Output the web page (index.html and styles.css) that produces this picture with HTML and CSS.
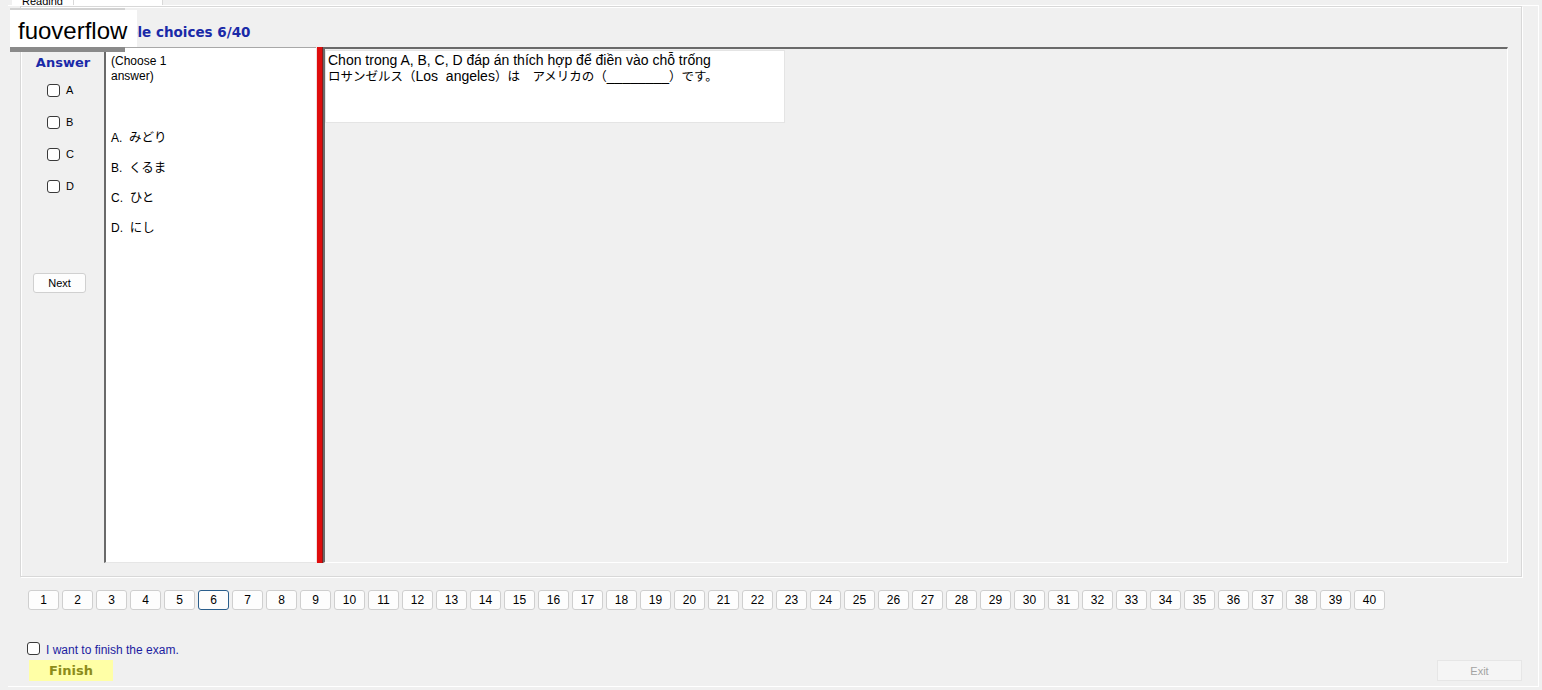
FILE: index.html
```html
<!DOCTYPE html>
<html lang="vi">
<head>
<meta charset="utf-8">
<title>Exam</title>
<link rel="stylesheet" href="styles.css">
</head>
<body>
<div class="tabstrip">
  <div class="tab tab-active"><span class="tab-label">Reading</span></div>
  <div class="tab tab-other"></div>
</div>
<div class="tabpage">
  <div class="group">
    <div class="title">Multiple choices 6/40</div>
    <div class="work">
      <div class="answers">
        <div class="answers-title">Answer</div>
        <label class="opt"><span class="cb"></span><span>A</span></label>
        <label class="opt"><span class="cb"></span><span>B</span></label>
        <label class="opt"><span class="cb"></span><span>C</span></label>
        <label class="opt"><span class="cb"></span><span>D</span></label>
        <button class="next">Next</button>
      </div>
      <div class="choices">
        <div class="intro">(Choose 1<br>answer)</div>
        <div class="options">
          <div class="option">A.&nbsp; <span class="jp">みどり</span></div>
          <div class="option">B.&nbsp; <span class="jp">くるま</span></div>
          <div class="option">C.&nbsp; <span class="jp">ひと</span></div>
          <div class="option">D.&nbsp; <span class="jp">にし</span></div>
        </div>
      </div>
      <div class="splitter"></div>
      <div class="question-area">
        <div class="question">Chon trong A, B, C, D đáp án thích hợp để điền vào chỗ trống<br><span class="jp">ロサンゼルス（</span>Los&nbsp; angeles<span class="jp">）は　アメリカの（</span>________<span class="jp">）です。</span></div>
      </div>
    </div>
  </div>
  <div class="pager">
    <button class="pg">1</button><button class="pg">2</button><button class="pg">3</button><button class="pg">4</button><button class="pg">5</button><button class="pg pg-current">6</button><button class="pg">7</button><button class="pg">8</button><button class="pg">9</button><button class="pg">10</button>
    <button class="pg">11</button><button class="pg">12</button><button class="pg">13</button><button class="pg">14</button><button class="pg">15</button><button class="pg">16</button><button class="pg">17</button><button class="pg">18</button><button class="pg">19</button><button class="pg">20</button>
    <button class="pg">21</button><button class="pg">22</button><button class="pg">23</button><button class="pg">24</button><button class="pg">25</button><button class="pg">26</button><button class="pg">27</button><button class="pg">28</button><button class="pg">29</button><button class="pg">30</button>
    <button class="pg">31</button><button class="pg">32</button><button class="pg">33</button><button class="pg">34</button><button class="pg">35</button><button class="pg">36</button><button class="pg">37</button><button class="pg">38</button><button class="pg">39</button><button class="pg">40</button>
  </div>
  <label class="finish-check"><span class="cb"></span><span>I want to finish the exam.</span></label>
  <div class="actions">
    <button class="finish">Finish</button>
    <button class="exit">Exit</button>
  </div>
</div>
<div class="watermark">
  <div class="wm-top"></div>
  <div class="wm-body">fuoverflow</div>
  <div class="wm-bottom"></div>
</div>
</body>
</html>
```

FILE: styles.css
```css
* { box-sizing: border-box; }

html, body {
  margin: 0;
  padding: 0;
}

body {
  width: 1542px;
  height: 690px;
  overflow: hidden;
  background: #f0f0f0;
  font-family: "Liberation Sans", Arial, "Noto Sans CJK JP", sans-serif;
  color: #000;
  position: relative;
}

.jp {
  font-family: "Noto Sans CJK JP", "Liberation Sans", sans-serif;
}

/* tab strip (mostly cut off at the top) */
.tabstrip {
  height: 5px;
  display: flex;
  padding-left: 12px;
}

.tab {
  height: 5px;
  overflow: hidden;
  background: #fff;
  border-right: 1px solid #d9d9d9;
}

.tab-active {
  width: 62px;
  display: flex;
  justify-content: center;
  align-items: flex-end;
}

.tab-label {
  font-size: 11px;
  line-height: 12px;
  margin-bottom: -2px;
  color: #000;
}

.tab-other {
  width: 89px;
}

/* tab page */
.tabpage {
  margin-left: 8px;
  width: 1531px;
  height: 682px;
  border-top: 1px solid #fff;
  border-right: 1px solid #fff;
  border-bottom: 1px solid #fff;
}

/* group box */
.group {
  margin-left: 12px;
  width: 1502px;
  height: 571px;
  border: 1px solid #d8d8d8;
  box-shadow: inset 1px 1px 0 #fff, 1px 1px 0 #fff;
}

.title {
  height: 40px;
  padding: 17px 0 0 68px;
  font-family: "DejaVu Sans", Tahoma, sans-serif;
  font-weight: bold;
  font-size: 13.5px;
  line-height: 17px;
  color: #1a2aa8;
}

.work {
  display: flex;
  margin-left: 1px;
  width: 1486px;
  height: 516px;
}

/* answer column */
.answers {
  width: 82px;
  flex: none;
  display: flex;
  flex-direction: column;
  padding-top: 8px;
}

.answers-title {
  height: 16px;
  line-height: 16px;
  text-align: center;
  font-family: "DejaVu Sans", Tahoma, sans-serif;
  font-weight: bold;
  font-size: 13px;
  color: #1a2aa8;
  margin-bottom: 11px;
}

.opt {
  display: flex;
  align-items: center;
  height: 16px;
  margin: 0 0 16px 25px;
  font-size: 11px;
  gap: 6px;
}

.cb {
  display: inline-block;
  width: 13px;
  height: 13px;
  border: 1px solid #3a3a3a;
  border-radius: 3px;
  background: #fff;
  flex: none;
}

.next {
  margin: 63px 0 0 11px;
  width: 53px;
  height: 20px;
  padding: 0;
  background: #fdfdfd;
  border: 1px solid #d0d0d0;
  border-radius: 3px;
  font-family: "Liberation Sans", Arial, sans-serif;
  font-size: 11px;
  color: #000;
}

/* choices panel */
.choices {
  width: 212px;
  flex: none;
  background: #fff;
  border-left: 2px solid #6a6a6a;
  border-top: 1px solid #a8a8a8;
  border-bottom: 1px solid #e6e6e6;
  padding: 6px 5px 0 5px;
  font-size: 12px;
}

.intro {
  line-height: 15px;
}

.options {
  margin-top: 38px;
}

.option {
  line-height: 30px;
  height: 30px;
}

.option .jp {
  font-size: 12.5px;
}

/* red splitter */
.splitter {
  width: 7px;
  flex: none;
  border-left: 1px solid #f2dede;
  background: #df0d0d;
  border-right: 1px solid #8a1a1a;
}

/* question area */
.question-area {
  flex: 1;
  border-top: 2px solid #6a6a6a;
  border-left: 2px solid #6a6a6a;
  border-right: 1px solid #fff;
  border-bottom: 1px solid #fff;
  padding-top: 1px;
}

.question {
  width: 460px;
  height: 73px;
  background: #fff;
  border: 1px solid #e4e4e4;
  padding: 2px 2px;
  font-size: 14px;
  line-height: 15px;
  white-space: nowrap;
}

.question .jp {
  font-size: 12.5px;
}

/* pager */
.pager {
  display: flex;
  gap: 3px;
  margin-top: 13px;
  padding-left: 20px;
}

.pg {
  width: 31px;
  height: 20px;
  padding: 0;
  background: #fdfdfd;
  border: 1px solid #cfcfcf;
  border-radius: 3px;
  font-family: "Liberation Sans", Arial, sans-serif;
  font-size: 12px;
  color: #000;
}

.pg-current {
  border-color: #2a5e8c;
}

/* finish */
.finish-check {
  display: flex;
  align-items: center;
  gap: 6px;
  height: 16px;
  margin-top: 30px;
  padding-left: 19px;
  font-size: 12px;
  color: #1c1ca0;
}

.finish-check span:last-child {
  padding-top: 3px;
}

.actions {
  display: flex;
  justify-content: space-between;
  margin-top: 4px;
  padding-left: 21px;
  padding-right: 16px;
}

.finish {
  width: 84px;
  height: 21px;
  padding: 0;
  border: none;
  background: #ffffa6;
  font-family: "DejaVu Sans", Tahoma, sans-serif;
  font-weight: bold;
  font-size: 13px;
  color: #8c8c1a;
}

.exit {
  width: 85px;
  height: 21px;
  padding: 0;
  border: 1px solid #e6e6e6;
  background: #f5f5f5;
  font-family: "Liberation Sans", Arial, sans-serif;
  font-size: 11px;
  color: #a3a3a3;
}

/* watermark overlay */
.watermark {
  position: absolute;
  left: 10px;
  top: 8px;
  width: 127px;
}

.wm-top {
  width: 115px;
  height: 2px;
  background: #d2d2d2;
}

.wm-body {
  height: 37px;
  background: #fff;
  padding: 4px 0 0 8px;
  font-family: "Liberation Sans", Arial, sans-serif;
  font-size: 24px;
  line-height: 33px;
  color: #000;
}

.wm-bottom {
  width: 115px;
  height: 5px;
  background: #8a8a8a;
}
```
